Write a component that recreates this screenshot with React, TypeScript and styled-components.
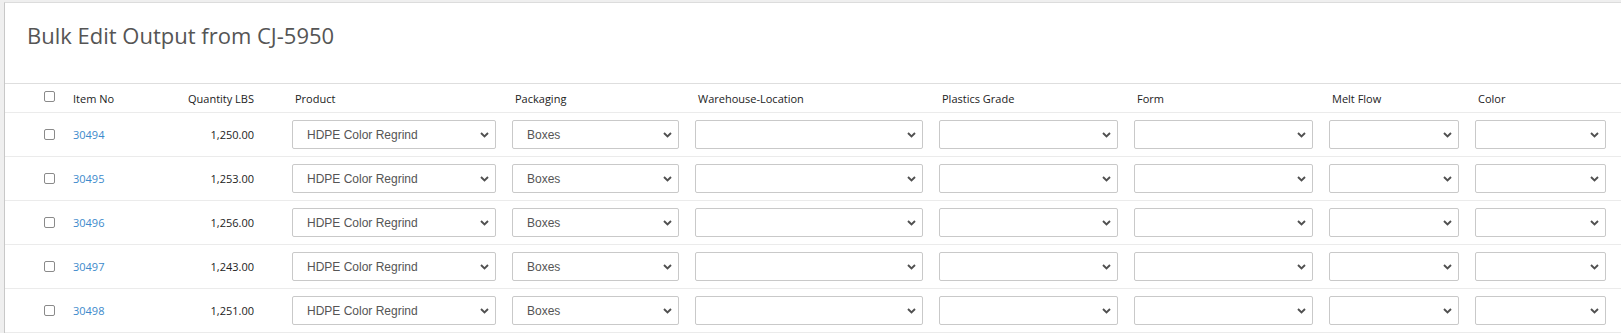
import React from "react";
import styled, { createGlobalStyle } from "styled-components";

const GlobalStyle = createGlobalStyle`
  html, body {
    margin: 0;
    padding: 0;
    background: #efefef;
    font-family: "Open Sans", "Liberation Sans", Arial, sans-serif;
  }
`;

const rows = [
  { item: "30494", qty: "1,250.00" },
  { item: "30495", qty: "1,253.00" },
  { item: "30496", qty: "1,256.00" },
  { item: "30497", qty: "1,243.00" },
  { item: "30498", qty: "1,251.00" },
];

const selectCols = [
  { key: "product", label: "Product", value: "HDPE Color Regrind" },
  { key: "packaging", label: "Packaging", value: "Boxes" },
  { key: "warehouse", label: "Warehouse-Location", value: "" },
  { key: "grade", label: "Plastics Grade", value: "" },
  { key: "form", label: "Form", value: "" },
  { key: "melt", label: "Melt Flow", value: "" },
  { key: "color", label: "Color", value: "" },
];

const COLUMNS = "60px 105px 114px 220px 183px 244px 195px 195px 146px 147px 1fr";

const Page = styled.div`
  padding: 2px 0 0 4px;
  min-height: 333px;
  box-sizing: border-box;
`;

const Panel = styled.div`
  background: #fff;
  border-top: 1px solid #dcdcdc;
  border-left: 1px solid #c8c8c8;
  min-height: 331px;
`;

const Header = styled.div`
  height: 80px;
  box-sizing: content-box;
  padding: 0 0 0 22px;
  border-bottom: 1px solid #dedede;
`;

const Title = styled.h1`
  margin: 0;
  padding-top: 17px;
  font-size: 22px;
  line-height: 30px;
  font-weight: 400;
  color: #555;
`;

const Row = styled.div<{ $head?: boolean }>`
  display: grid;
  grid-template-columns: ${COLUMNS};
  align-items: center;
  height: ${(p) => (p.$head ? "28px" : "43px")};
  border-bottom: 1px solid #ebebeb;
  font-size: 11px;
  color: #222;
`;

const CheckCell = styled.div<{ $lift?: boolean }>`
  padding-left: 39px;
  display: flex;
  align-items: center;
  margin-top: ${(p) => (p.$lift ? "-4px" : "0")};
`;

const Check = styled.input.attrs({ type: "checkbox" })`
  appearance: none;
  margin: 0;
  width: 11px;
  height: 11px;
  border: 1px solid #8a8a8a;
  border-radius: 2px;
  background: #fff;
  box-sizing: border-box;
`;

const TextCell = styled.div<{ $right?: boolean; $pad?: number }>`
  padding-left: ${(p) => (p.$right ? 0 : p.$pad ?? 8)}px;
  padding-right: ${(p) => (p.$right ? 30 : 0)}px;
  text-align: ${(p) => (p.$right ? "right" : "left")};
  white-space: nowrap;
`;

const ItemLink = styled.a`
  color: #3d8acb;
  text-decoration: none;
`;

const SelectCell = styled.div`
  padding: 0 8px;
  position: relative;
`;

const Select = styled.select`
  appearance: none;
  width: 100%;
  height: 29px;
  box-sizing: border-box;
  border: 1px solid #c9c9c9;
  border-radius: 2px;
  background: #fff;
  padding: 0 20px 0 14px;
  font-family: "Liberation Sans", Arial, sans-serif;
  font-size: 12px;
  color: #555;
  outline: none;
`;

const Chevron = styled.svg`
  position: absolute;
  right: 15px;
  top: 50%;
  margin-top: -3px;
  pointer-events: none;
`;

function Dropdown({ value }: { value: string }) {
  return (
    <SelectCell>
      <Select defaultValue={value}>
        <option value="">{""}</option>
        {value && <option value={value}>{value}</option>}
      </Select>
      <Chevron width="9" height="6" viewBox="0 0 9 6">
        <path d="M1 1 L4.5 4.5 L8 1" fill="none" stroke="#505050" strokeWidth="1.9" />
      </Chevron>
    </SelectCell>
  );
}

export default function App() {
  return (
    <>
      <GlobalStyle />
      <Page>
        <Panel>
          <Header>
            <Title>Bulk Edit Output from CJ-5950</Title>
          </Header>
          <Row $head>
            <CheckCell $lift>
              <Check />
            </CheckCell>
            <TextCell>Item No</TextCell>
            <TextCell $right>Quantity LBS</TextCell>
            {selectCols.map((c) => (
              <TextCell key={c.key} $pad={11}>
                {c.label}
              </TextCell>
            ))}
            <div />
          </Row>
          {rows.map((r) => (
            <Row key={r.item}>
              <CheckCell>
                <Check />
              </CheckCell>
              <TextCell>
                <ItemLink href="#">{r.item}</ItemLink>
              </TextCell>
              <TextCell $right>{r.qty}</TextCell>
              {selectCols.map((c) => (
                <Dropdown key={c.key} value={c.value} />
              ))}
              <div />
            </Row>
          ))}
        </Panel>
      </Page>
    </>
  );
}
